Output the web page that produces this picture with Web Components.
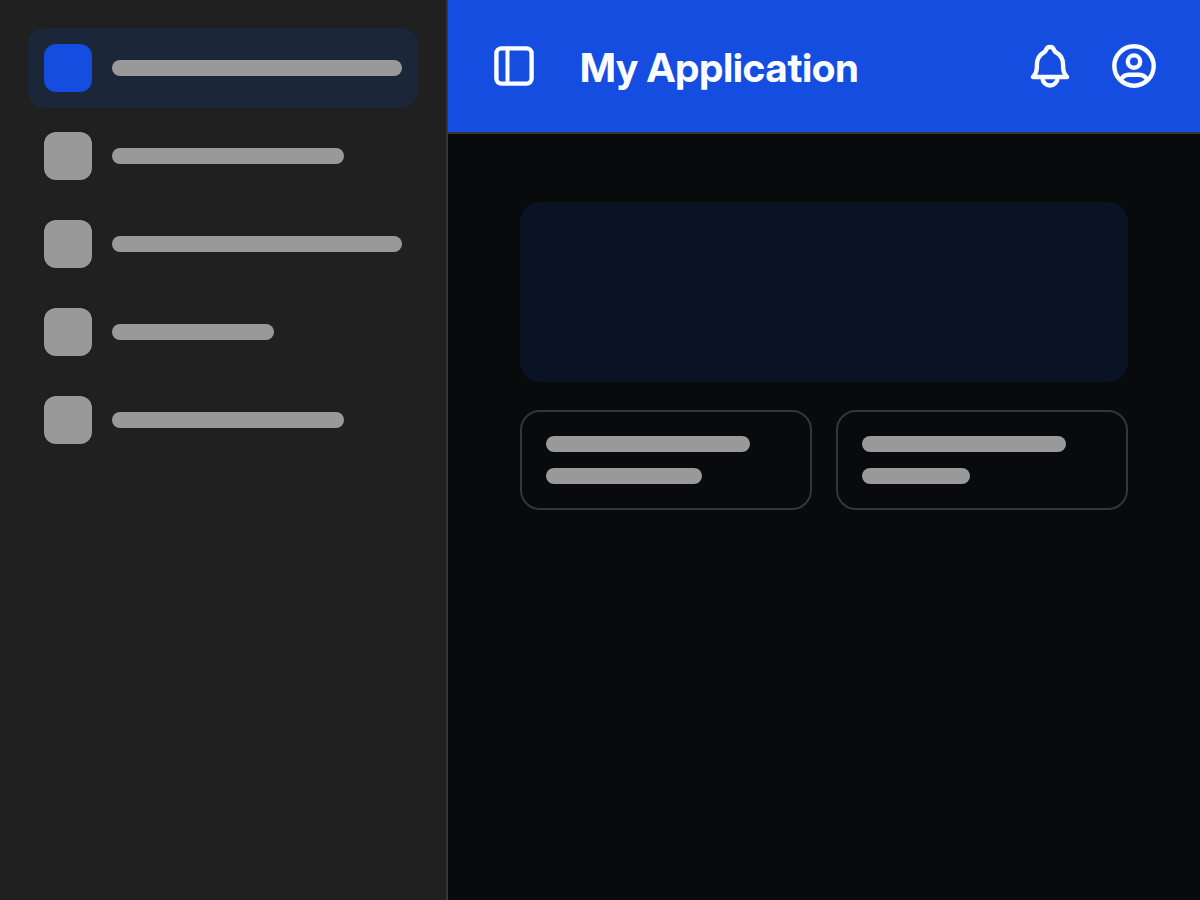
<!DOCTYPE html>
<html lang="en">
<head>
    <meta charset="UTF-8">
    <meta name="viewport" content="width=device-width, initial-scale=1.0">
    <title>My Application</title>
    <style>
        :root {
            --primary: #154de0;
            --on-primary: #fafdff;
            --page: #090a0c;
            --surface: #202021;
            --surface-active: #1c2639;
            --hero: #0a1324;
            --border: #363636;
            --skeleton: #999999;
        }
        body {
            margin: 0;
            background: var(--page);
            font-family: "Inter Display", Inter, "Liberation Sans", sans-serif;
        }
    </style>
</head>
<body>
    <app-shell>
        <side-nav slot="sidebar">
            <nav-item active></nav-item>
            <nav-item length="80%"></nav-item>
            <nav-item></nav-item>
            <nav-item length="56%"></nav-item>
            <nav-item length="80%"></nav-item>
        </side-nav>
        <app-header slot="header">My Application</app-header>
        <hero-panel></hero-panel>
        <card-grid>
            <info-card>
                <skeleton-bar length="85%"></skeleton-bar>
                <skeleton-bar length="65%"></skeleton-bar>
            </info-card>
            <info-card>
                <skeleton-bar length="85%"></skeleton-bar>
                <skeleton-bar length="45%"></skeleton-bar>
            </info-card>
        </card-grid>
    </app-shell>

    <script>
        class SkeletonBar extends HTMLElement {
            connectedCallback() {
                this.attachShadow({ mode: 'open' });
                this.shadowRoot.innerHTML = `
                    <style>
                        :host {
                            display: block;
                        }
                        .bar {
                            width: ${this.getAttribute('length') || '100%'};
                            height: 16px;
                            border-radius: 8px;
                            background: var(--skeleton);
                        }
                    </style>
                    <div class="bar"></div>
                `;
            }
        }
        customElements.define('skeleton-bar', SkeletonBar);

        class NavItem extends HTMLElement {
            connectedCallback() {
                const length = this.getAttribute('length') || '100%';
                this.attachShadow({ mode: 'open' });
                this.shadowRoot.innerHTML = `
                    <style>
                        :host {
                            display: block;
                        }
                        a {
                            display: flex;
                            align-items: center;
                            gap: 20px;
                            padding: 16px;
                            border-radius: 16px;
                        }
                        .icon {
                            flex: none;
                            width: 48px;
                            height: 48px;
                            border-radius: 12px;
                            background: var(--skeleton);
                        }
                        skeleton-bar {
                            flex: 1;
                        }
                        :host([active]) a {
                            background: var(--surface-active);
                        }
                        :host([active]) .icon {
                            background: var(--primary);
                        }
                    </style>
                    <a href="#" aria-label="Menu item">
                        <span class="icon"></span>
                        <skeleton-bar length="${length}"></skeleton-bar>
                    </a>
                `;
            }
        }
        customElements.define('nav-item', NavItem);

        class SideNav extends HTMLElement {
            connectedCallback() {
                this.attachShadow({ mode: 'open' });
                this.shadowRoot.innerHTML = `
                    <style>
                        :host {
                            display: block;
                            padding: 28px;
                            background: var(--surface);
                            border-right: 2px solid var(--border);
                        }
                        nav {
                            display: flex;
                            flex-direction: column;
                            gap: 8px;
                        }
                    </style>
                    <nav><slot></slot></nav>
                `;
            }
        }
        customElements.define('side-nav', SideNav);

        class AppHeader extends HTMLElement {
            connectedCallback() {
                this.attachShadow({ mode: 'open' });
                this.shadowRoot.innerHTML = `
                    <style>
                        :host {
                            display: block;
                            background: var(--primary);
                            border-bottom: 2px solid var(--border);
                            color: var(--on-primary);
                        }
                        header {
                            display: flex;
                            align-items: flex-end;
                            gap: 42px;
                            padding: 42px;
                        }
                        h1 {
                            margin: 0;
                            flex: 1;
                            font-size: 40px;
                            line-height: 44px;
                            font-weight: 700;
                            white-space: nowrap;
                        }
                        .actions {
                            display: flex;
                            gap: 36px;
                        }
                        button {
                            display: block;
                            padding: 0;
                            border: none;
                            background: none;
                            color: inherit;
                            cursor: pointer;
                        }
                        svg {
                            display: block;
                            width: 48px;
                            height: 48px;
                            fill: none;
                            stroke: currentColor;
                            stroke-width: 4.4;
                            stroke-linecap: round;
                            stroke-linejoin: round;
                        }
                    </style>
                    <header>
                        <button type="button" aria-label="Toggle sidebar">
                            <svg viewBox="0 0 48 48">
                                <rect x="6.4" y="6.4" width="35.2" height="35.2" rx="5"/>
                                <path d="M17.5 6.4v35.2" stroke-width="4"/>
                            </svg>
                        </button>
                        <h1><slot></slot></h1>
                        <div class="actions">
                            <button type="button" aria-label="Notifications">
                                <svg viewBox="0 0 48 48">
                                    <path d="M6.9 35h34.2c-2.6-2.6-4-6-4-10v-2.200c0-5.600-2.700-10-6.900-12.300-1.300-.7-1.900-1.500-2.300-2.700a4.100 4.100 0 0 0-7.800 0c-.4 1.200-1 2-2.300 2.700-4.200 2.300-6.900 6.700-6.900 12.300v2.200c0 4-1.400 7.400-4 10z"/>
                                    <path d="M16.500 36a7.500 7.500 0 0 0 15 0"/>
                                </svg>
                            </button>
                            <button type="button" aria-label="Account">
                                <svg viewBox="0 0 48 48">
                                    <circle cx="24" cy="24" r="19.700"/>
                                    <circle cx="24" cy="19.600" r="6.200"/>
                                    <path d="M11 37.600c1.500-3 4.200-4.900 7.800-4.900h10.400c3.600 0 6.300 1.900 7.800 4.900"/>
                                </svg>
                            </button>
                        </div>
                    </header>
                `;
            }
        }
        customElements.define('app-header', AppHeader);

        class HeroPanel extends HTMLElement {
            connectedCallback() {
                this.attachShadow({ mode: 'open' });
                this.shadowRoot.innerHTML = `
                    <style>
                        :host {
                            display: block;
                            height: 180px;
                            border-radius: 20px;
                            background: var(--hero);
                        }
                    </style>
                `;
            }
        }
        customElements.define('hero-panel', HeroPanel);

        class InfoCard extends HTMLElement {
            connectedCallback() {
                this.attachShadow({ mode: 'open' });
                this.shadowRoot.innerHTML = `
                    <style>
                        :host {
                            display: flex;
                            flex-direction: column;
                            gap: 16px;
                            padding: 24px;
                            border: 2px solid var(--border);
                            border-radius: 20px;
                        }
                    </style>
                    <slot></slot>
                `;
            }
        }
        customElements.define('info-card', InfoCard);

        class CardGrid extends HTMLElement {
            connectedCallback() {
                this.attachShadow({ mode: 'open' });
                this.shadowRoot.innerHTML = `
                    <style>
                        :host {
                            display: grid;
                            grid-template-columns: repeat(2, 1fr);
                            gap: 24px;
                        }
                    </style>
                    <slot></slot>
                `;
            }
        }
        customElements.define('card-grid', CardGrid);

        class AppShell extends HTMLElement {
            connectedCallback() {
                this.attachShadow({ mode: 'open' });
                this.shadowRoot.innerHTML = `
                    <style>
                        :host {
                            display: grid;
                            grid-template-columns: 448px 1fr;
                            min-height: 100vh;
                        }
                        .content {
                            display: flex;
                            flex-direction: column;
                        }
                        main {
                            display: flex;
                            flex-direction: column;
                            gap: 28px;
                            padding: 68px 72px;
                        }
                    </style>
                    <slot name="sidebar"></slot>
                    <div class="content">
                        <slot name="header"></slot>
                        <main><slot></slot></main>
                    </div>
                `;
            }
        }
        customElements.define('app-shell', AppShell);
    </script>
</body>
</html>
